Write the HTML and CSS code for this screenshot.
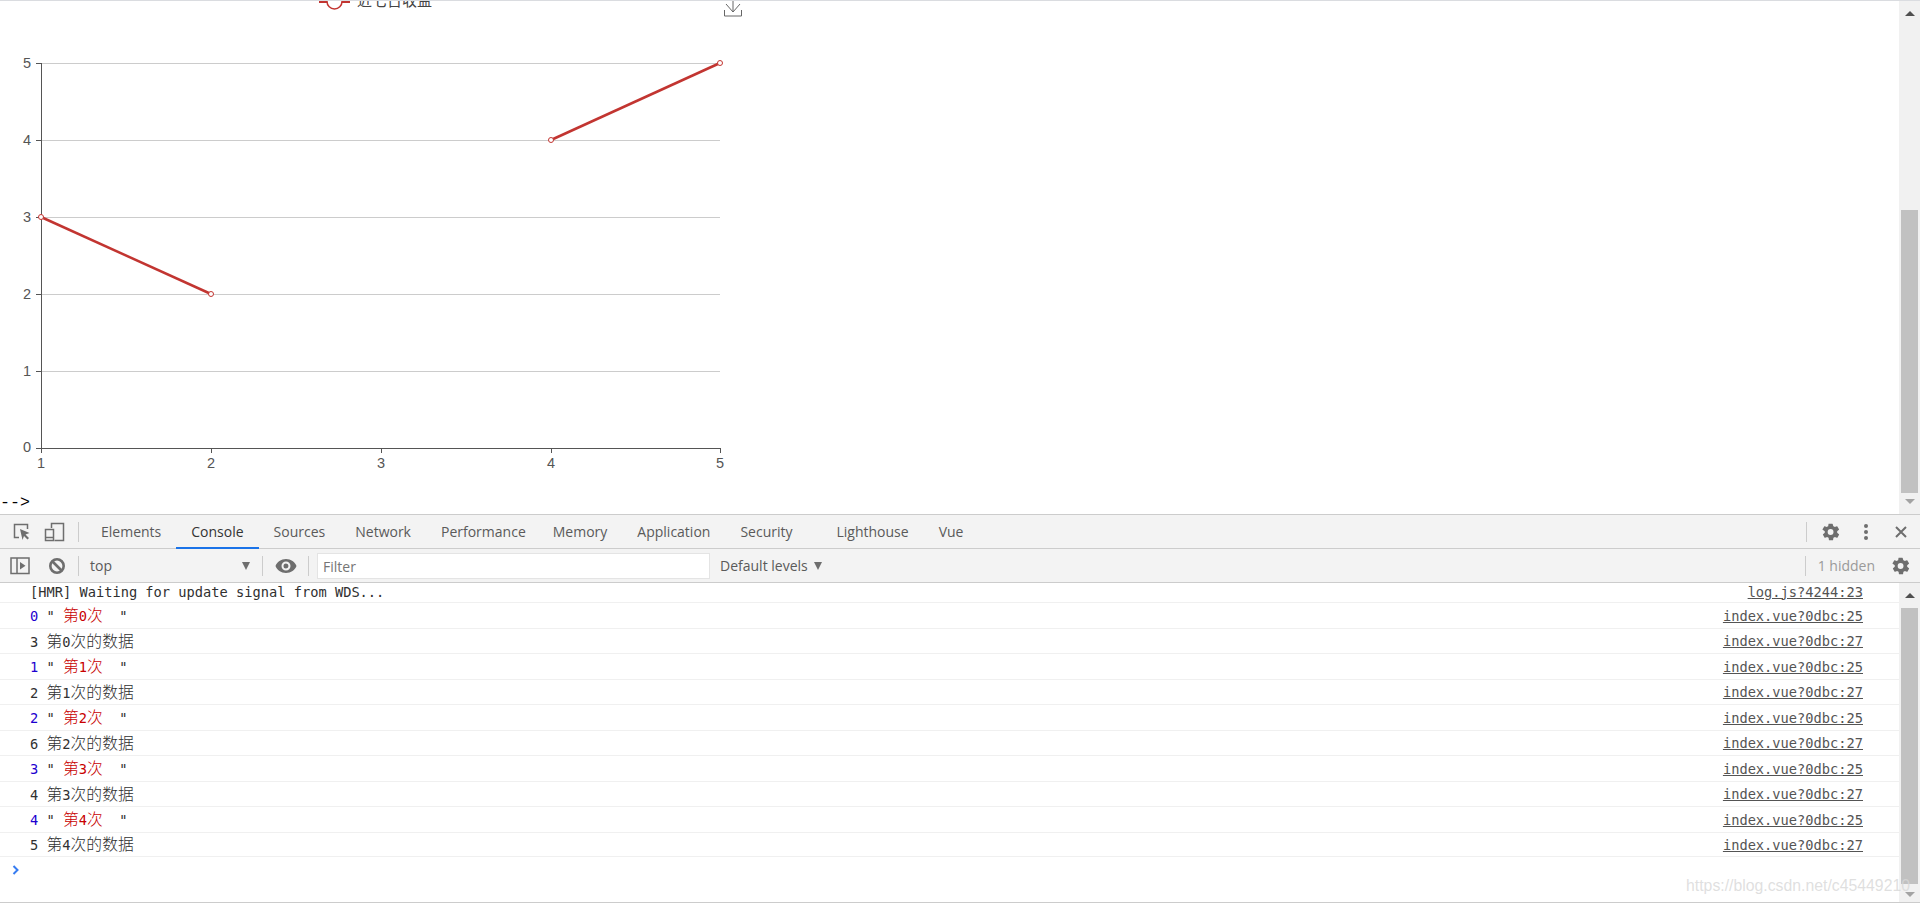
FILE: index.html
```html
<!DOCTYPE html>
<html lang="zh">
<head>
<meta charset="utf-8">
<title>Console</title>
<link rel="stylesheet" href="styles.css">
</head>
<body>
<div class="page">
  <div class="canvas">
    <svg class="chart" width="760" height="490" viewBox="0 0 760 490">
      <g class="grid">
        <line x1="41" y1="63" x2="720" y2="63"/>
        <line x1="41" y1="140" x2="720" y2="140"/>
        <line x1="41" y1="217" x2="720" y2="217"/>
        <line x1="41" y1="294.5" x2="720" y2="294.5"/>
        <line x1="41" y1="371" x2="720" y2="371"/>
      </g>
      <g class="axis">
        <line x1="41.5" y1="63" x2="41.5" y2="449"/>
        <line x1="36" y1="448.5" x2="720" y2="448.5"/>
        <line x1="36" y1="63" x2="41" y2="63"/>
        <line x1="36" y1="140" x2="41" y2="140"/>
        <line x1="36" y1="217" x2="41" y2="217"/>
        <line x1="36" y1="294" x2="41" y2="294"/>
        <line x1="36" y1="371" x2="41" y2="371"/>
        <line x1="41.5" y1="448" x2="41.5" y2="453"/>
        <line x1="211.5" y1="448" x2="211.5" y2="453"/>
        <line x1="381" y1="448" x2="381" y2="453"/>
        <line x1="551" y1="448" x2="551" y2="453"/>
        <line x1="720.5" y1="448" x2="720.5" y2="453"/>
      </g>
      <g class="ticks">
        <text x="31" y="68" text-anchor="end">5</text>
        <text x="31" y="145" text-anchor="end">4</text>
        <text x="31" y="222" text-anchor="end">3</text>
        <text x="31" y="299" text-anchor="end">2</text>
        <text x="31" y="376" text-anchor="end">1</text>
        <text x="31" y="452" text-anchor="end">0</text>
        <text x="41" y="468" text-anchor="middle">1</text>
        <text x="211" y="468" text-anchor="middle">2</text>
        <text x="381" y="468" text-anchor="middle">3</text>
        <text x="551" y="468" text-anchor="middle">4</text>
        <text x="720" y="468" text-anchor="middle">5</text>
      </g>
      <g class="series">
        <polyline points="41,217 211,294"/>
        <polyline points="551,140 720,63"/>
        <circle cx="41" cy="217" r="2.5"/>
        <circle cx="211" cy="294" r="2.5"/>
        <circle cx="551" cy="140" r="2.5"/>
        <circle cx="720" cy="63" r="2.5"/>
      </g>
      <g class="legend">
        <line x1="319" y1="2" x2="350" y2="2"/>
        <circle cx="334.5" cy="1.5" r="7.5"/>
        <text x="357" y="6">近七日收益</text>
      </g>
      <path class="save" d="M724.5 10v6h17v-6M733 0v12M726 4l7 8 7-8"/>
    </svg>
    <div class="comment-end">--&gt;</div>
  </div>
  <div class="scrollbar">
    <span class="arrow-up"></span>
    <div class="track-page"><div class="thumb thumb-page"></div></div>
    <span class="arrow-down arrow-down-page"></span>
  </div>
</div>

<div class="devtools">
  <div class="tabbar">
    <div class="tool-icon tool-inspect">
      <svg width="20" height="20" viewBox="0 0 20 20"><path class="ico-stroke" d="M7 15.5H2.500V2.500h13V7"/><path class="ico-fill" d="M8 7l9.500 4-4 1.500 3.500 3.500-1.500 1.500-3.500-3.500-1.500 4z"/></svg>
    </div>
    <div class="tool-icon tool-device">
      <svg width="22" height="22" viewBox="0 0 22 22"><path class="ico-stroke" d="M7.500 7V2.500h12v17h-9"/><rect class="ico-stroke" x="1.500" y="8.500" width="8" height="11"/><line class="ico-stroke" x1="2" y1="16.500" x2="9" y2="16.500"/></svg>
    </div>
    <span class="sep sep-tab"></span>
    <nav class="tabs">
      <span class="tab">Elements</span>
      <span class="tab tab-active">Console</span>
      <span class="tab">Sources</span>
      <span class="tab">Network</span>
      <span class="tab tab-perf">Performance</span>
      <span class="tab">Memory</span>
      <span class="tab">Application</span>
      <span class="tab tab-security">Security</span>
      <span class="tab">Lighthouse</span>
      <span class="tab">Vue</span>
    </nav>
    <div class="tabbar-right">
      <span class="sep"></span>
      <svg class="gear gear-top" width="20" height="20" viewBox="0 0 24 24"><path class="ico-fill" d="M19.400 13c.04-.33.06-.66.06-1s-.02-.67-.06-1l2.100-1.650c.2-.15.25-.42.120-.64l-2-3.460c-.12-.22-.39-.3-.61-.22l-2.490 1c-.52-.4-1.080-.73-1.690-.98L14 2.420A.49.490 0 0 0 13.500 2h-4c-.25 0-.46.18-.49.42l-.38 2.650c-.61.25-1.170.59-1.690.98l-2.490-1c-.23-.09-.49 0-.61.22l-2 3.460c-.13.22-.07.49.120.64L4.560 11c-.04.33-.07.66-.07 1s.03.67.07 1l-2.100 1.650c-.2.15-.25.42-.12.64l2 3.460c.12.22.39.3.61.22l2.490-1c.52.4 1.080.73 1.690.98l.38 2.650c.03.24.24.42.49.42h4c.25 0 .46-.18.49-.42l.38-2.650c.61-.25 1.170-.59 1.690-.98l2.490 1c.23.09.49 0 .61-.22l2-3.460c.13-.22.07-.49-.12-.64zM11.500 15.500a3.500 3.500 0 1 1 0-7 3.500 3.500 0 0 1 0 7z"/></svg>
      <svg class="dots" width="6" height="18" viewBox="0 0 6 18"><circle class="ico-fill" cx="3" cy="3" r="2"/><circle class="ico-fill" cx="3" cy="9" r="2"/><circle class="ico-fill" cx="3" cy="15" r="2"/></svg>
      <svg class="close" width="14" height="14" viewBox="0 0 14 14"><path class="ico-line" d="M2 2l10 10M12 2L2 12"/></svg>
    </div>
  </div>

  <div class="toolbar">
    <div class="tool-icon tool-sidebar">
      <svg width="20" height="18" viewBox="0 0 20 18"><rect class="ico-stroke" x="1" y="1" width="18" height="15.500"/><line class="ico-stroke" x1="7" y1="1" x2="7" y2="16"/><path class="ico-fill" d="M10 5l5.500 3.800-5.500 3.700z"/></svg>
    </div>
    <div class="tool-icon tool-block">
      <svg width="18" height="18" viewBox="0 0 18 18"><circle class="ico-bold" cx="9" cy="9" r="6.700"/><line class="ico-bold" x1="4.500" y1="4.500" x2="13.500" y2="13.500"/></svg>
    </div>
    <span class="sep sep-top"></span>
    <div class="context"><span>top</span><span class="tri tri-context"></span></div>
    <span class="sep sep-eye"></span>
    <svg class="eye" width="22" height="14" viewBox="0 0 22 14"><path class="ico-fill" d="M11 0C6 0 2 3 .500 7 2 11 6 14 11 14s9-3 10.500-7C20 3 16 0 11 0zm0 11.500a4.500 4.500 0 1 1 0-9 4.500 4.500 0 0 1 0 9zM11 4.500a2.500 2.500 0 1 0 0 5 2.500 2.500 0 0 0 0-5z"/></svg>
    <span class="sep sep-filter"></span>
    <div class="filter">Filter</div>
    <div class="levels"><span>Default levels</span><span class="tri tri-levels"></span></div>
    <div class="toolbar-right">
      <span class="sep"></span>
      <span class="hidden-count">1 hidden</span>
      <svg class="gear gear-bottom" width="20" height="20" viewBox="0 0 24 24"><path class="ico-fill" d="M19.400 13c.04-.33.06-.66.06-1s-.02-.67-.06-1l2.100-1.650c.2-.15.25-.42.120-.64l-2-3.460c-.12-.22-.39-.3-.61-.22l-2.490 1c-.52-.4-1.080-.73-1.690-.98L14 2.420A.49.490 0 0 0 13.500 2h-4c-.25 0-.46.18-.49.42l-.38 2.650c-.61.25-1.170.59-1.690.98l-2.490-1c-.23-.09-.49 0-.61.22l-2 3.460c-.13.22-.07.49.120.64L4.560 11c-.04.33-.07.66-.07 1s.03.67.07 1l-2.100 1.650c-.2.15-.25.42-.12.64l2 3.460c.12.22.39.3.61.22l2.490-1c.52.4 1.080.73 1.690.98l.38 2.650c.03.24.24.42.49.42h4c.25 0 .46-.18.49-.42l.38-2.650c.61-.25 1.170-.59 1.690-.98l2.490 1c.23.09.49 0 .61-.22l2-3.460c.13-.22.07-.49-.12-.64zM11.500 15.500a3.500 3.500 0 1 1 0-7 3.500 3.500 0 0 1 0 7z"/></svg>
    </div>
  </div>

  <div class="console">
    <div class="log">
      <div class="row row-first"><span class="msg">[HMR] Waiting for update signal from WDS...</span><a class="src">log.js?4244:23</a></div>
      <div class="row row-red"><span class="msg"><span class="num">0</span> " <span class="str">第</span><span class="red">0</span><span class="str">次</span>  "</span><a class="src">index.vue?0dbc:25</a></div>
      <div class="row row-plain"><span class="msg">3 <span class="cjk">第</span>0<span class="cjk">次的数据</span></span><a class="src">index.vue?0dbc:27</a></div>
      <div class="row row-red"><span class="msg"><span class="num">1</span> " <span class="str">第</span><span class="red">1</span><span class="str">次</span>  "</span><a class="src">index.vue?0dbc:25</a></div>
      <div class="row row-plain"><span class="msg">2 <span class="cjk">第</span>1<span class="cjk">次的数据</span></span><a class="src">index.vue?0dbc:27</a></div>
      <div class="row row-red"><span class="msg"><span class="num">2</span> " <span class="str">第</span><span class="red">2</span><span class="str">次</span>  "</span><a class="src">index.vue?0dbc:25</a></div>
      <div class="row row-plain"><span class="msg">6 <span class="cjk">第</span>2<span class="cjk">次的数据</span></span><a class="src">index.vue?0dbc:27</a></div>
      <div class="row row-red"><span class="msg"><span class="num">3</span> " <span class="str">第</span><span class="red">3</span><span class="str">次</span>  "</span><a class="src">index.vue?0dbc:25</a></div>
      <div class="row row-plain"><span class="msg">4 <span class="cjk">第</span>3<span class="cjk">次的数据</span></span><a class="src">index.vue?0dbc:27</a></div>
      <div class="row row-red"><span class="msg"><span class="num">4</span> " <span class="str">第</span><span class="red">4</span><span class="str">次</span>  "</span><a class="src">index.vue?0dbc:25</a></div>
      <div class="row row-plain row-last"><span class="msg">5 <span class="cjk">第</span>4<span class="cjk">次的数据</span></span><a class="src">index.vue?0dbc:27</a></div>
      <div class="prompt"><svg width="8" height="10" viewBox="0 0 8 10"><path d="M1.500 1l4 4-4 4" class="chev"/></svg></div>
    </div>
    <div class="scrollbar scrollbar-console">
      <span class="arrow-up"></span>
      <div class="track-console"><div class="thumb thumb-console"></div></div>
      <span class="arrow-down"></span>
    </div>
    <div class="watermark">https://blog.csdn.net/c45449210</div>
  </div>
</div>
</body>
</html>
```

FILE: styles.css
```css
* { box-sizing: border-box; }
html, body { margin: 0; height: 903px; overflow: hidden; background: #fff; }
body { display: flex; flex-direction: column; font-family: "Open Sans", "Liberation Sans", sans-serif; }

.page { height: 514px; flex: none; display: flex; border-top: 1px solid #dadce0; }
.canvas { flex: 1; position: relative; min-width: 0; overflow: hidden; }
.chart { display: block; margin-top: -1px; }
.comment-end { position: absolute; left: 0; top: 492px; font: 16.6px/20px "Liberation Mono", monospace; color: #000; }

.grid line { stroke: #ccc; stroke-width: 1; shape-rendering: crispEdges; }
.axis line { stroke: #555; stroke-width: 1; shape-rendering: crispEdges; }
.ticks text { font: 14.5px "Liberation Sans", sans-serif; fill: #555; }
.series polyline { fill: none; stroke: #c23531; stroke-width: 2.500; }
.series circle { fill: #fff; stroke: #c23531; stroke-width: 1; }
.legend line { stroke: #c23531; stroke-width: 2; }
.legend circle { fill: #fff; stroke: #c23531; stroke-width: 1.500; }
.legend text { font: 15px "Noto Sans CJK SC", sans-serif; fill: #444; }
.save { fill: none; stroke: #666; stroke-width: 1; }

.scrollbar { width: 21px; flex: none; background: #f1f1f1; display: flex; flex-direction: column; align-items: center; }
.track-page { flex: 1; width: 100%; padding: 194px 2px 6px; display: flex; }
.thumb { flex: 1; background: #c1c1c1; }
.arrow-up, .arrow-down { flex: none; width: 0; height: 0; border-left: 5px solid transparent; border-right: 5px solid transparent; }
.arrow-up { border-bottom: 5px solid #505050; margin-top: 10px; }
.arrow-down { border-top: 5px solid #a3a3a3; margin-bottom: 5px; }
.arrow-down-page { margin-bottom: 10px; }

.devtools { flex: 1; min-height: 0; display: flex; flex-direction: column; border-top: 1px solid #ccc; border-bottom: 1px solid #ccc; }
.tabbar { height: 34px; flex: none; display: flex; align-items: center; background: #f3f3f3; border-bottom: 1px solid #ccc; }
.toolbar { height: 34px; flex: none; display: flex; align-items: center; background: #f3f3f3; border-bottom: 1px solid #ccc; }

.tool-icon { flex: none; display: flex; align-items: center; }
.tool-inspect { margin-left: 12px; }
.tool-device { margin-left: 12px; }
.tool-sidebar { margin-left: 10px; }
.tool-block { margin-left: 18px; }
.ico-stroke { fill: none; stroke: #6e6e6e; stroke-width: 1.500; }
.ico-fill { fill: #6e6e6e; }
.ico-bold { fill: none; stroke: #6e6e6e; stroke-width: 2.600; }
.ico-line { fill: none; stroke: #6e6e6e; stroke-width: 2; }

.sep { flex: none; width: 1px; height: 20px; background: #ccc; }
.sep-tab { margin-left: 12px; }
.sep-top { margin-left: 12px; }

.tabs { display: flex; align-self: stretch; font-size: 14px; color: #5a5a5a; margin-left: 7px; }
.tab { display: flex; align-items: center; padding: 1px 15px 0; margin-bottom: -1px; border-bottom: 2px solid transparent; }
.tab-active { color: #333; border-bottom-color: #1a73e8; }
.tab-perf { padding-right: 12px; }
.tab-security { padding-right: 29px; }
.tabbar-right { margin-left: auto; display: flex; align-items: center; }
.tabbar-right .sep { margin-right: 14px; }
.gear-top { margin-right: 22px; }
.dots { margin-right: 25px; }
.close { margin-right: 12px; }

.context { flex: none; width: 172px; margin-left: 11px; display: flex; justify-content: space-between; align-items: center; font-size: 14px; color: #5a5a5a; padding-right: 12px; }
.tri { width: 0; height: 0; border-left: 4.500px solid transparent; border-right: 4.500px solid transparent; border-top: 8px solid #6e6e6e; }
.eye { flex: none; margin-left: 12px; }
.sep-filter { margin-left: 11px; }
.filter { flex: none; width: 393px; height: 26px; margin-left: 8px; background: #fff; border: 1px solid #e4e4e4; font-size: 14px; line-height: 25px; padding-left: 5px; color: #757575; }
.levels { flex: none; margin-left: 10px; display: flex; align-items: center; gap: 6px; font-size: 14px; color: #5a5a5a; }
.toolbar-right { margin-left: auto; display: flex; align-items: center; }
.hidden-count { font-size: 14px; color: #9a9a9a; margin-left: 12px; }
.gear-bottom { margin: 0 9px 0 16px; }

.console { flex: 1; min-height: 0; display: flex; position: relative; }
.log { flex: 1; min-width: 0; font: 13.700px/18px "DejaVu Sans Mono", "Liberation Mono", monospace; color: #303030; }
.row { display: flex; align-items: center; justify-content: space-between; padding: 0 36px 0 30px; border-bottom: 1px solid #f0f0f0; }
.row-first { height: 20px; padding-bottom: 2px; }
.row-red { height: 26px; }
.row-plain { height: 25px; }
.row-last { height: 24px; }
.msg { display: block; white-space: pre; }
.cjk, .str { font-family: "Noto Sans CJK SC", sans-serif; font-size: 15.800px; font-weight: 300; line-height: 18px; }
.num { color: #1c00cf; }
.str, .red { color: #c80000; }
.src { color: #545454; text-decoration: underline; }
.prompt { height: 20px; padding: 8px 0 0 12px; display: flex; }
.chev { fill: none; stroke: #367cf1; stroke-width: 2; }

.scrollbar-console { height: 100%; }
.track-console { flex: 1; width: 100%; padding: 10px 2px 8px; display: flex; }
.watermark { position: absolute; right: 10px; bottom: 4px; font: 15.800px/24px "Liberation Sans", sans-serif; color: rgba(215, 215, 215, 0.8); pointer-events: none; }
```
